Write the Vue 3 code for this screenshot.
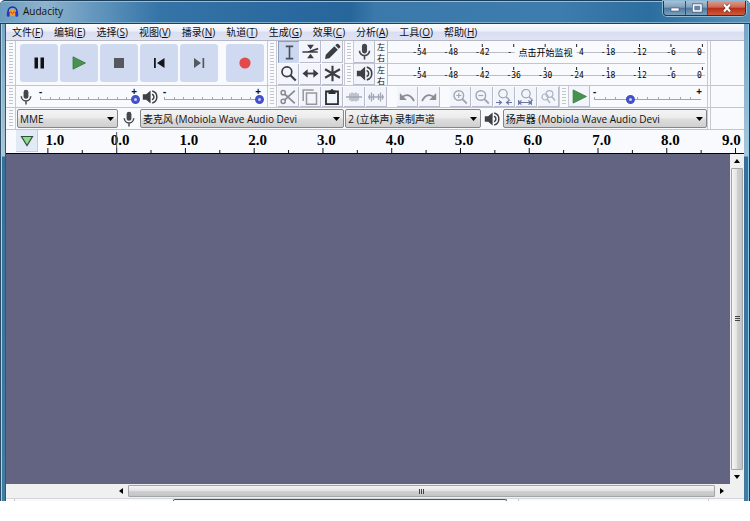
<script setup>
import { ref } from 'vue'

const menus = [
  ['文件', 'F'], ['编辑', 'E'], ['选择', 'S'], ['视图', 'V'], ['播录', 'N'], ['轨道', 'T'],
  ['生成', 'G'], ['效果', 'C'], ['分析', 'A'], ['工具', 'O'], ['帮助', 'H'],
]
const transport = [
  ['pause', '暂停'], ['play', '播放'], ['stop', '停止'], ['start', '跳至开头'], ['end', '跳至结尾'], ['record', '录制'],
]
const tools = [
  ['select', '选择工具'], ['envelope', '包络工具'], ['draw', '绘制工具'],
  ['zoom', '缩放工具'], ['shift', '时间移动工具'], ['multi', '多功能工具'],
]
const edits = [
  [['cut', '剪切'], ['copy', '复制'], ['paste', '粘贴'], ['trim', '修剪'], ['silence', '静音']],
  [['undo', '撤销'], ['redo', '重做']],
  [['zoomin', '放大'], ['zoomout', '缩小'], ['fitsel', '适应选区'], ['fitproj', '适应项目'], ['zoomtoggle', '缩放切换']],
]
const scale = [-54, -48, -42, -36, -30, -24, -18, -12, -6, 0].map((db, i) => {
  const x = `${(9.9 + i * 9.92).toFixed(2)}%`
  if (db === 0) return { db, x, text: '0', at: '99%', anchor: 'end' }
  return { db, x, text: String(db), at: x, anchor: 'middle' }
})
// The hint covers the middle of the scale, so only the outer digits stay.
const hintedScale = scale.map((s) => {
  if (s.db === -36) return { ...s, text: '-', at: '37.6%', anchor: 'start' }
  if (s.db === -30) return { ...s, text: '' }
  if (s.db === -24) return { ...s, text: '4', at: '61.8%', anchor: 'end' }
  return s
})
const meters = [
  { icon: 'mic', label: '录音电平', hint: '点击开始监视', scale: hintedScale },
  { icon: 'speaker', label: '播放电平', hint: '', scale },
]
const pct = (n) => `${n.toFixed(2)}%`
const seconds = Array.from({ length: 11 }, (_, i) => ({
  text: Math.abs(i - 1).toFixed(1),
  tick: pct(1.4 + i * 9.74),
  half: pct(6.27 + i * 9.74),
  label: pct(Math.min(Math.max(1.9 + i * 9.74, 2.4), 98.2)),
}))
const recVolume = ref(100)
const playVolume = ref(100)
const speed = ref(34)
</script>

<template>
  <div class="window">
    <svg class="defs" width="0" height="0" aria-hidden="true">
      <defs>
        <symbol id="i-mic" viewBox="0 0 16 16"><rect x="5.600" y=".8" width="4.800" height="9" rx="2.400" fill="#45474b" /><path d="M3.300 7.200a4.700 4.700 0 0 0 9.400 0M8 11.800V15.500" fill="none" stroke="#45474b" stroke-width="1.500" /></symbol>
        <symbol id="i-speaker" viewBox="0 0 16 16"><path d="M.8 5.300h3.400L8.600 1.500v13L4.200 10.700H.8z" fill="#3e4044" /><path d="M10 5.200a3 3 0 0 1 0 5.600M10.200 2a6.200 6.200 0 0 1 0 12" fill="none" stroke="#3e4044" stroke-width="1.500" /></symbol>
        <symbol id="i-pause" viewBox="0 0 16 16"><path d="M3.500 2.500H7v11H3.500zM9.500 2.500H13v11H9.500z" fill="#111" /></symbol>
        <symbol id="i-play" viewBox="0 0 16 16"><path d="M2 1.800 14.500 8 2 14.200z" fill="#48924f" stroke="#3c7a44" stroke-width=".8" /></symbol>
        <symbol id="i-stop" viewBox="0 0 16 16"><path d="M3 3h10v10H3z" fill="#55585d" /></symbol>
        <symbol id="i-start" viewBox="0 0 16 16"><path d="M3 3h1.800v10H3zM13.500 3v10L6 8z" fill="#15161a" /></symbol>
        <symbol id="i-end" viewBox="0 0 16 16"><path d="M11.500 3h1.700v10h-1.700zM3 3v10l7-5z" fill="#55585d" /></symbol>
        <symbol id="i-record" viewBox="0 0 16 16"><circle cx="8" cy="8" r="5.600" fill="#e24a4c" /></symbol>
        <symbol id="i-select" viewBox="0 0 16 16"><path d="M4.500 2.200h7M4.500 13.800h7M8 2v12" stroke="#4b4f58" stroke-width="1.500" /></symbol>
        <symbol id="i-envelope" viewBox="0 0 20 16"><path d="M.5 8.600h6q2.500 0 5-1.500l7.500-2.500M.5 8.600h18" fill="none" stroke="#3c3d40" stroke-width="1.900" /><path d="M6 0h8l-4 5.500zM6 16h8l-4-5.500z" fill="#3c3d40" /></symbol>
        <symbol id="i-draw" viewBox="0 0 16 16"><path d="m1 15 .7-4 8-8L13 6.300l-8 8zM10.600 2.200l1.300-1.300q.8-.6 1.600.1l1.600 1.600q.7.800 0 1.600l-1.300 1.300z" fill="#3c3d40" /></symbol>
        <symbol id="i-zoom" viewBox="0 0 16 16"><circle cx="6.500" cy="6.300" r="4.600" fill="none" stroke="#3c3d40" stroke-width="1.600" /><path d="m9.800 9.600 5 5" stroke="#3c3d40" stroke-width="2" /></symbol>
        <symbol id="i-shift" viewBox="0 0 18 16"><path d="M4 8h10" stroke="#3c3d40" stroke-width="2" /><path d="M.5 8 6 3.500v9zM17.500 8 12 3.500v9z" fill="#3c3d40" /></symbol>
        <symbol id="i-multi" viewBox="0 0 16 16"><path d="M8 .8v14.400M1 4l14 8M15 4 1 12" stroke="#3c3d40" stroke-width="2" /></symbol>
        <symbol id="i-cut" viewBox="0 0 16 16"><path d="m4.500 4.800 10.300 9.500M4.500 11.200 14.800 1.700" stroke="#8a8b8e" stroke-width="1.800" /><circle cx="3.200" cy="3.700" r="2.100" fill="none" stroke="#8a8b8e" stroke-width="1.500" /><circle cx="3.200" cy="12.300" r="2.100" fill="none" stroke="#8a8b8e" stroke-width="1.500" /></symbol>
        <symbol id="i-copy" viewBox="0 0 16 16"><path d="M1.200 12V1h10.500M4.500 4h10v11.200h-10z" fill="none" stroke="#96989b" stroke-width="1.500" /></symbol>
        <symbol id="i-paste" viewBox="0 0 16 16"><path d="M2 2.500h12v12.700H2z" fill="none" stroke="#2d2e31" stroke-width="1.800" /><path d="M4.500 1.500h2a1.500 1.500 0 0 1 3 0h2V5h-7z" fill="#2d2e31" /></symbol>
        <symbol id="i-trim" viewBox="0 0 16 16"><path d="M0 8h16M4 4.500v7M6 3.500v9M8 4v8M10 3.500v9M12 4.500v7" stroke="#a3a7b5" stroke-width="1.300" /></symbol>
        <symbol id="i-silence" viewBox="0 0 16 16"><path d="M0 8h16M1.500 5.500v5M3.500 3.500v9M5.500 5v6M10.500 5v6M12.500 3.500v9M14.500 5.500v5" stroke="#a3a7b5" stroke-width="1.300" /></symbol>
        <symbol id="i-undo" viewBox="0 0 16 16"><path d="M2.500 8.500Q10 2.500 15 12" fill="none" stroke="#8b8d91" stroke-width="1.800" /><path d="M.8 4v7h7z" fill="#8b8d91" /></symbol>
        <symbol id="i-redo" viewBox="0 0 16 16"><path d="M13.500 8.500Q6 2.500 1 12" fill="none" stroke="#8b8d91" stroke-width="1.800" /><path d="M15.200 4v7h-7z" fill="#8b8d91" /></symbol>
        <symbol id="i-lens" viewBox="0 0 16 16"><circle cx="6.800" cy="6.500" r="4.800" fill="none" stroke="#a3a6ae" stroke-width="1.400" /><path d="m10.300 10 4.500 4.500" stroke="#a3a6ae" stroke-width="1.800" /></symbol>
        <symbol id="i-zoomin" viewBox="0 0 16 16"><use href="#i-lens" /><path d="M4.300 6.500h5M6.800 4v5" stroke="#a3a6ae" stroke-width="1.200" /></symbol>
        <symbol id="i-zoomout" viewBox="0 0 16 16"><use href="#i-lens" /><path d="M4.300 6.500h5" stroke="#a3a6ae" stroke-width="1.200" /></symbol>
        <symbol id="i-fitsel" viewBox="0 0 16 16"><use href="#i-lens" width="14" height="14" x="1" y="-1" /><path d="M0 13.500h5M3 11.500l2.500 2L3 15.500M16 13.500h-5M13 11.500l-2.500 2 2.500 2" fill="none" stroke="#6b76a4" stroke-width="1.100" /></symbol>
        <symbol id="i-fitproj" viewBox="0 0 16 16"><use href="#i-lens" width="14" height="14" x="2" y="-1" /><path d="M.6 11v5M13.400 11v5M1 13.500h12M3.500 11.500l-2.500 2 2.500 2M10.500 11.500l2.500 2-2.500 2" fill="none" stroke="#6b76a4" stroke-width="1.100" /></symbol>
        <symbol id="i-zoomtoggle" viewBox="0 0 16 16"><circle cx="9.500" cy="5" r="3.400" fill="none" stroke="#b0b4be" stroke-width="1.200" /><circle cx="5" cy="8" r="3" fill="none" stroke="#b0b4be" stroke-width="1.200" /><path d="m12 8 3 3.500M7.200 10.200 10 14" stroke="#b0b4be" stroke-width="1.500" /></symbol>
      </defs>
    </svg>

    <header class="titlebar">
      <svg class="logo" viewBox="0 0 16 16" aria-hidden="true">
        <path d="M4 8q2-3.500 4-3t4 3v4.500q-4 2-8 0z" fill="#f0a42c" />
        <path d="M4 10.500 6 8l2 3.500L10 8l2 2.500" fill="none" stroke="#d8432a" stroke-width="1.200" />
        <path d="M2.500 10V8a5.500 5.500 0 0 1 11 0v2" fill="none" stroke="#1b2bb4" stroke-width="1.800" />
        <rect x="1" y="8" width="3.500" height="6.500" rx="1.600" fill="#2438cf" />
        <rect x="11.500" y="8" width="3.500" height="6.500" rx="1.600" fill="#2438cf" />
      </svg>
      <h1>Audacity</h1>
      <div class="captions">
        <button aria-label="最小化"><svg viewBox="0 0 16 10"><rect x="4" y="5" width="8" height="3" fill="#fff" stroke="#44566e" stroke-width=".6" /></svg></button>
        <button aria-label="最大化"><svg viewBox="0 0 16 10"><path d="M4.500 2h7.500v6H4.500z" fill="none" stroke="#44566e" stroke-width="3" /><path d="M4.500 2h7.500v6H4.500z" fill="#6685a5" stroke="#fff" stroke-width="1.600" /></svg></button>
        <button class="close" aria-label="关闭"><svg viewBox="0 0 16 10"><path d="m5 1.500 6 7M11 1.500l-6 7" stroke="#5c2a2a" stroke-width="3.400" /><path d="m5 1.500 6 7M11 1.500l-6 7" stroke="#fff" stroke-width="2.200" /></svg></button>
      </div>
    </header>

    <main class="client">
      <nav class="menubar">
        <button v-for="[name, key] in menus" :key="key">{{ name }}<span>(<u>{{ key }}</u>)</span></button>
      </nav>

      <div class="dock">
        <div class="row row-main">
          <section class="left">
            <i class="grip"></i>
            <div class="transport">
              <button v-for="[icon, label] in transport" :key="icon" :class="icon" :aria-label="label">
                <svg><use :href="`#i-${icon}`" /></svg>
              </button>
            </div>
          </section>
          <section class="right">
            <i class="grip"></i>
            <div class="tools">
              <button v-for="[icon, label] in tools" :key="icon" class="tool" :class="{ active: icon === 'select' }" :aria-label="label">
                <svg><use :href="`#i-${icon}`" /></svg>
              </button>
            </div>
            <div class="meters">
              <div v-for="m in meters" :key="m.icon" class="meter">
                <i class="grip"></i>
                <button class="tool" :aria-label="m.label"><svg><use :href="`#i-${m.icon}`" /></svg></button>
                <div class="channels"><span>左</span><span>右</span></div>
                <svg class="scale">
                  <line x1="0" x2="100%" y1="11.500" y2="11.500" stroke="#bcbec6" />
                  <rect v-if="m.hint" x="40%" y="7" width="19.500%" height="10" fill="#f8f9fd" />
                  <g v-for="s in m.scale" :key="s.db">
                    <line :x1="s.x" :x2="s.x" y1="3" y2="6" stroke="#222" />
                    <text v-if="s.text" :x="s.at" y="14" :text-anchor="s.anchor">{{ s.text }}</text>
                  </g>
                  <text v-if="m.hint" class="hint" x="49.700%" y="15" text-anchor="middle">{{ m.hint }}</text>
                </svg>
              </div>
            </div>
          </section>
          <div class="rest"></div>
        </div>

        <div class="row row-edit">
          <section class="left">
            <i class="grip"></i>
            <div class="mixer">
              <svg class="glyph"><use href="#i-mic" /></svg>
              <label class="slider"><span class="signs"><b>-</b><b>+</b></span><input v-model="recVolume" type="range" aria-label="录音音量" /></label>
              <svg class="glyph"><use href="#i-speaker" /></svg>
              <label class="slider"><span class="signs"><b>-</b><b>+</b></span><input v-model="playVolume" type="range" aria-label="播放音量" /></label>
            </div>
          </section>
          <section class="right">
            <i class="grip"></i>
            <div class="edits">
              <div v-for="(group, g) in edits" :key="g" class="group">
                <button v-for="[icon, label] in group" :key="icon" class="tool" :aria-label="label">
                  <svg><use :href="`#i-${icon}`" /></svg>
                </button>
              </div>
            </div>
            <i class="grip"></i>
            <button class="tool" aria-label="以指定速度播放"><svg><use href="#i-play" /></svg></button>
            <label class="slider"><span class="signs"><b>-</b><b>+</b></span><input v-model="speed" type="range" aria-label="播放速度" /></label>
          </section>
          <div class="rest"></div>
        </div>

        <div class="row row-device">
          <section class="devices">
            <i class="grip"></i>
            <label class="combo host"><select aria-label="音频主机"><option>MME</option></select><svg viewBox="0 0 7 4"><path d="M0 0h7L3.500 4z" /></svg></label>
            <svg class="glyph"><use href="#i-mic" /></svg>
            <label class="combo wide"><select aria-label="录音设备"><option>麦克风 (Mobiola Wave Audio Devi</option></select><svg viewBox="0 0 7 4"><path d="M0 0h7L3.500 4z" /></svg></label>
            <label class="combo mid"><select aria-label="录制声道"><option>2 (立体声) 录制声道</option></select><svg viewBox="0 0 7 4"><path d="M0 0h7L3.500 4z" /></svg></label>
            <svg class="glyph"><use href="#i-speaker" /></svg>
            <label class="combo wide"><select aria-label="播放设备"><option>扬声器 (Mobiola Wave Audio Devi</option></select><svg viewBox="0 0 7 4"><path d="M0 0h7L3.500 4z" /></svg></label>
          </section>
          <div class="rest"></div>
        </div>
      </div>

      <div class="ruler">
        <button class="pin" aria-label="播放头"><svg viewBox="0 0 14 12"><path d="M1.500 1.500h11L7 10.500z" fill="#8fdc8c" stroke="#33543a" stroke-width="1.200" /></svg></button>
        <svg class="timeline">
          <g v-for="(s, i) in seconds" :key="i">
            <line :x1="s.tick" :x2="s.tick" y1="18" y2="23" stroke="#111" />
            <line :x1="s.half" :x2="s.half" y1="20" y2="23" stroke="#111" />
            <text :x="s.label" y="15" text-anchor="middle">{{ s.text }}</text>
          </g>
          <line :x1="seconds[1].tick" :x2="seconds[1].tick" y1="2" y2="23" stroke="#555" />
        </svg>
      </div>

      <div class="workspace">
        <div class="tracks"></div>
        <div class="vscroll">
          <button aria-label="向上滚动"><svg viewBox="0 0 6 4"><path d="M0 4h6L3 0z" /></svg></button>
          <div class="thumb"><i></i></div>
          <button aria-label="向下滚动"><svg viewBox="0 0 6 4"><path d="M0 0h6L3 4z" /></svg></button>
        </div>
      </div>
      <div class="hscroll">
        <button aria-label="向左滚动"><svg viewBox="0 0 4 6"><path d="M4 0v6L0 3z" /></svg></button>
        <div class="thumb"><i></i></div>
        <button aria-label="向右滚动"><svg viewBox="0 0 4 6"><path d="M0 0v6l4-3z" /></svg></button>
      </div>
      <footer class="bottom"><i class="edge"></i><i class="box"></i><i class="gap"></i><i class="fill"></i><i class="tail"></i></footer>
    </main>
  </div>
</template>

<style>
body {
  background: #fff;
}
</style>

<style scoped>
.window, .window * {
  box-sizing: border-box;
}
.window {
  display: flex;
  flex-direction: column;
  height: calc(100vh - 20px);
  min-height: 300px;
  padding: 0 6px;
  border-radius: 5px 5px 0 0;
  overflow: hidden;
  font-family: "Open Sans", "Noto Sans CJK SC", sans-serif;
  font-size: 10px;
  color: #111;
  background:
    linear-gradient(90deg, #2b4d66 1px, #a4d3ea 1px, #a4d3ea 2px, transparent 2px, transparent 5px, #35566e 5px) left / 6px 100% no-repeat,
    linear-gradient(270deg, #17384f 1px, #8ccbe8 1px, #8ccbe8 2px, transparent 2px) right / 6px 100% no-repeat,
    linear-gradient(180deg, #6f9fc1 0, #a9c6d9 156px, #35709c 157px, #417ca3 100%);
}
.defs {
  position: absolute;
}
button {
  padding: 0;
  margin: 0;
  border: 0;
  background: none;
  font: inherit;
  color: inherit;
}
svg {
  display: block;
}
.titlebar {
  display: flex;
  flex: 0 0 24px;
  gap: 4px;
  margin: 0 -6px;
  padding: 0 4px 0 6px;
  border-top: 1px solid #1d3e59;
  border-bottom: 1px solid #1c4263;
  border-radius: 5px 5px 0 0;
  box-shadow: inset 0 1px #8cc0e0, inset 0 -1px #7fadcd;
  background: linear-gradient(90deg, #6c9cbe 0, #8fb3cd 45px, #6799bf 90px, #3474a7 160px, #29699f 290px, #26669b 350px, #3a79a9 375px, #3d7dad 560px, #2c6e9f 650px, #5790b5 100%);
}
.logo {
  width: 13px;
  height: 13px;
  margin-top: 4px;
}
h1 {
  flex: 1;
  margin: 0;
  font-size: 10px;
  line-height: 21px;
  font-weight: 400;
}
.captions {
  display: flex;
  height: 15px;
  border: 1px solid #24374a;
  border-top: 0;
  border-radius: 0 0 4px 4px;
  box-shadow: 0 0 0 1px #8fbad5;
  overflow: hidden;
}
.captions button {
  display: grid;
  place-items: center;
  width: 22px;
  border-right: 1px solid #35516b;
  background: linear-gradient(#a9c1d6, #7f9fbd 45%, #4e779c 50%, #7aa0bf);
}
.captions .close {
  width: 37px;
  border: 0;
  background: linear-gradient(#dd9c8c, #ce6853 45%, #b52d16 50%, #cf5a3c);
}
.captions svg {
  width: 16px;
  height: 10px;
}
.client {
  display: flex;
  flex: 1;
  flex-direction: column;
  min-height: 0;
  background: #f9fafe;
}
.menubar {
  display: flex;
  flex: 0 0 16px;
  gap: 11px;
  padding-left: 6px;
  background: linear-gradient(#fbfcfe, #eceffa 45%, #d9def1 50%, #dfe3f3);
}
.menubar button {
  line-height: 15px;
  white-space: nowrap;
}
.row {
  display: flex;
  height: 22px;
  border-bottom: 1px solid #c4c5cb;
}
.row-main {
  height: 46px;
  border-top: 1px solid #b5b8c4;
}
.left {
  display: flex;
  flex: 0 0 261px;
}
.right, .devices {
  display: flex;
  flex: 1;
  min-width: 0;
  border-right: 1px solid #c9cad0;
}
.right {
  padding-right: 2px;
}
.rest {
  flex: 0 0 34px;
  margin-left: 2px;
  border-left: 1px solid #c9cad0;
}
.grip {
  flex: 0 0 10px;
  border: 1px solid #c9cad0;
  border-width: 0 1px;
  background: repeating-linear-gradient(#c3c5cc 0 1px, transparent 1px 3px) center / 4px calc(100% - 4px) no-repeat;
}
.left .grip, .devices .grip {
  border-left: 0;
}
.transport {
  display: flex;
  align-items: center;
  gap: 2px;
  padding-left: 4px;
}
.transport button {
  display: grid;
  place-items: center;
  width: 38px;
  height: 38px;
  border-radius: 3px;
  background: #cfdaf0;
}
.transport .record {
  margin-left: 6px;
}
.transport svg {
  width: 16px;
  height: 16px;
}
.tools {
  display: grid;
  grid-template-columns: repeat(3, 21px);
  gap: 1px;
  padding-left: 1px;
}
.tool {
  display: grid;
  flex: 0 0 21px;
  place-items: center;
  width: 21px;
  border: 1px solid #b9bccb;
  border-width: 0 1px 1px 0;
  background: #f3f5fc;
}
.tool.active {
  border-width: 1px 0 0 1px;
  border-color: #8c9dc0;
  background: #cbd8ef;
}
.tool svg {
  width: 17px;
  height: 17px;
}
.meters {
  display: grid;
  flex: 1;
  margin-left: 1px;
}
.meter {
  display: flex;
  min-height: 0;
}
.meter + .meter {
  border-top: 1px solid #c4c5cb;
}
.channels {
  display: flex;
  flex: 0 0 13px;
  flex-direction: column;
  align-items: center;
  border-right: 1px solid #b9bccb;
  font-size: 8px;
  line-height: 11px;
}
.scale {
  flex: 1;
  min-width: 0;
  height: 21px;
  font-family: "DejaVu Sans Mono", monospace;
  font-size: 8px;
}
.hint {
  font-family: "Noto Sans CJK SC", sans-serif;
  font-size: 9px;
}
.mixer {
  display: flex;
  flex: 1;
  align-items: center;
  gap: 2px;
  padding: 0 3px 0 2px;
}
.glyph {
  flex: 0 0 16px;
  width: 16px;
  height: 16px;
}
.slider {
  display: grid;
  flex: 1;
  grid-template-rows: 8px 10px;
  align-self: flex-start;
  min-width: 0;
}
.signs {
  display: flex;
  justify-content: space-between;
  padding: 0 3px;
  line-height: 10px;
}
.slider input {
  appearance: none;
  width: 100%;
  height: 10px;
  margin: 0;
  background:
    linear-gradient(#a3a4a8, #a3a4a8) 4px 5px / calc(100% - 8px) 1px no-repeat,
    repeating-linear-gradient(90deg, #a3a4a8 0 1px, transparent 1px 10%) 4px 3px / calc(100% - 8px) 2px no-repeat;
}
.slider input::-webkit-slider-thumb {
  appearance: none;
  width: 9px;
  height: 9px;
  border: 3px solid #4350c8;
  border-radius: 50%;
  background: #c9cef4;
}
.edits {
  display: flex;
  gap: 10px;
  padding: 1px 0 0 1px;
}
.group {
  display: flex;
  gap: 1px;
}
.group svg {
  width: 16px;
  height: 16px;
}
.devices {
  align-items: center;
  gap: 1px;
}
.devices .grip {
  align-self: stretch;
}
.devices .glyph {
  margin: 0 2px;
}
.combo {
  display: grid;
  grid-template-columns: 1fr 14px;
  align-items: center;
  min-width: 0;
}
.host {
  flex: 0 0 101px;
}
.wide {
  flex: 205 1 0;
}
.mid {
  flex: 136 1 0;
}
.combo select {
  appearance: none;
  grid-area: 1 / 1 / 2 / 3;
  width: 100%;
  height: 19px;
  padding: 0 14px 0 2px;
  border: 1px solid #85868a;
  border-radius: 2px;
  background: linear-gradient(#f4f4f4, #ebebeb 48%, #dddddd 52%, #d0d0d0);
  font: 10px/16px "Open Sans", "Noto Sans CJK SC", sans-serif;
  color: #111;
}
.combo svg {
  grid-area: 1 / 2 / 2 / 3;
  width: 7px;
  height: 4px;
  margin-left: 3px;
  pointer-events: none;
}
.ruler {
  display: flex;
  flex: 0 0 24px;
  padding-left: 10px;
  border-bottom: 1px solid #000;
}
.pin {
  display: grid;
  place-items: center;
  flex: 0 0 22px;
  height: 22px;
  border: 1px solid #c3cbdc;
  border-width: 0 1px 1px 0;
  background: #e3eaf7;
}
.pin svg {
  width: 14px;
  height: 12px;
}
.timeline {
  flex: 1;
  min-width: 0;
  height: 23px;
  font-family: "Liberation Serif", serif;
  font-size: 15px;
  font-weight: 700;
}
.workspace {
  display: flex;
  flex: 1;
  min-height: 0;
}
.tracks {
  flex: 1;
  background: #626482;
}
.vscroll {
  display: flex;
  flex: 0 0 14px;
  flex-direction: column;
  background: #f0f0f1;
}
.vscroll button, .hscroll button {
  display: grid;
  place-items: center;
  flex: 0 0 14px;
}
.vscroll svg {
  width: 6px;
  height: 4px;
}
.hscroll svg {
  width: 4px;
  height: 6px;
}
.thumb {
  display: grid;
  flex: 1;
  place-items: center;
  border: 1px solid #a3a4a8;
  border-radius: 1px;
}
.vscroll .thumb {
  margin: 0 1px;
  background: linear-gradient(90deg, #f6f6f6, #e4e4e5 45%, #cfcfd2 55%, #c3c3c7);
}
.vscroll .thumb i {
  width: 5px;
  height: 6px;
  background: repeating-linear-gradient(#444 0 1px, transparent 1px 2px);
}
.hscroll {
  display: flex;
  flex: 0 0 14px;
  padding: 0 15px 0 108px;
  background: #f0f0f0;
}
.hscroll .thumb {
  margin: 1px 0;
  background: linear-gradient(#f6f6f6, #e4e4e5 45%, #cfcfd2 55%, #c3c3c7);
}
.hscroll .thumb i {
  width: 6px;
  height: 5px;
  background: repeating-linear-gradient(90deg, #444 0 1px, transparent 1px 2px);
}
.bottom {
  display: flex;
  flex: 0 0 3px;
  border-top: 1px solid #d5d6da;
}
.edge {
  flex: 0 0 9px;
  border-right: 1px solid #c9cad0;
}
.box {
  flex: 0 0 334px;
  margin-left: 158px;
  border: 1px solid #55565a;
  border-bottom: 0;
  border-radius: 2px 2px 0 0;
}
.gap {
  flex: 0 0 12px;
  border-right: 1px solid #c9cad0;
}
.fill {
  flex: 1;
}
.tail {
  flex: 0 0 36px;
  border-left: 1px solid #c9cad0;
}
</style>
